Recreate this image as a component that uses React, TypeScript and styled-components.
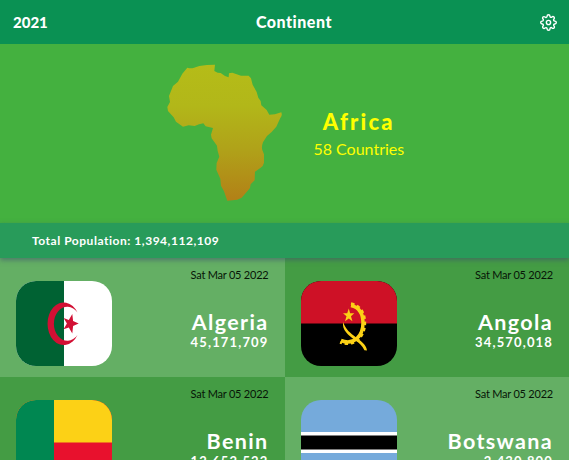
import React from 'react';
import styled, { createGlobalStyle } from 'styled-components';
import { FiSettings } from 'react-icons/fi';

const GlobalStyle = createGlobalStyle`
  * { box-sizing: border-box; }
  body { margin: 0; font-family: Lato, sans-serif; overflow: hidden; }
  h1, h2, h3, p { margin: 0; }
`;

const Page = styled.div`
  height: 460px;
  overflow: hidden;
  background: #44b13f;
`;

const Header = styled.header`
  height: 44px;
  padding: 0 13px;
  display: grid;
  grid-template-columns: 243px auto 1fr;
  align-items: center;
  background: #0a9153;
  color: #fff;
  font-family: 'Gill Sans', 'Gill Sans MT', Lato, sans-serif;
  font-weight: 900;
  line-height: 20px;
`;

const Year = styled.span`
  font-size: 15px;
`;

const Title = styled.h1`
  font-size: 16px;
  font-weight: 900;
  letter-spacing: 0.5px;
`;

const SettingsButton = styled.button`
  justify-self: end;
  display: flex;
  margin-right: -1px;
  padding: 0;
  border: 0;
  background: none;
  color: #fff;
  font-size: 17px;
`;

const Hero = styled.section`
  height: 179px;
  padding: 20px 0 0 167px;
  display: flex;
  align-items: flex-start;
`;

const AfricaMap = styled.svg`
  width: 115.3px;
  height: 137.3px;
  flex: none;
`;

const HeroText = styled.div`
  width: 92px;
  margin: 44px 0 0 30.5px;
  color: #ff0;
  text-align: center;
  white-space: nowrap;
`;

const ContinentName = styled.h2`
  font-size: 22px;
  line-height: 28px;
  font-weight: 900;
  letter-spacing: 2.2px;
`;

const CountryCount = styled.p`
  font-size: 16px;
  line-height: 26px;
`;

const TotalBar = styled.div`
  position: relative;
  height: 35px;
  padding-left: 32px;
  display: flex;
  align-items: center;
  background: #289b5a;
  box-shadow: 0 2px 5px rgba(60, 80, 110, 0.6);
  color: #fff;
  font-size: 12px;
  font-weight: 700;
  letter-spacing: 0.53px;
`;

const Grid = styled.main`
  display: grid;
  grid-template-columns: 1fr 1fr;
  grid-auto-rows: 119px;
`;

const Card = styled.article<{ $dark: boolean }>`
  padding: 9px 16px 0;
  display: flex;
  justify-content: space-between;
  background: ${(p) => (p.$dark ? '#449c44' : '#64af64')};
`;

const FlagFrame = styled.div`
  width: 96px;
  height: 85px;
  margin-top: 14px;
  border-radius: 20px;
  overflow: hidden;
  svg { display: block; }
`;

const Info = styled.div`
  display: flex;
  flex-direction: column;
  align-items: flex-end;
  white-space: nowrap;
`;

const UpdatedOn = styled.p`
  font-size: 11px;
  line-height: 16px;
  color: #071507;
  letter-spacing: -0.22px;
`;

const CountryName = styled.h3`
  margin-top: 26px;
  color: #fff;
  font-size: 21.5px;
  line-height: 26px;
  font-weight: 700;
  letter-spacing: 1.35px;
`;

const Population = styled.p`
  color: #fff;
  font-size: 13px;
  line-height: 15px;
  font-weight: 700;
  letter-spacing: 1.15px;
`;

const AlgeriaFlag = () => (
  <svg width="96" height="85" viewBox="0 0 96 85">
    <path fill="#fff" d="M0 0h96v85H0z" />
    <path fill="#006233" d="M0 0h48v85H0z" />
    <path fill="#d21034" d="M61.500 31.500A16.200 21.300 0 1 0 61.500 54A13.500 17 0 1 1 61.500 31.500z" />
    <path fill="#d21034" d="M56.300 33l.8 7.100 5.600 2.400-5.600 2.400-.8 7.600-3.500-6.100-5.200 1.800 3.300-5.700-3.300-5.500 5.200 1.900z" />
  </svg>
);

const AngolaFlag = () => (
  <svg width="96" height="85" viewBox="0 0 96 85">
    <path d="M0 0h96v85H0z" />
    <path fill="#ce1126" d="M0 0h96v42.500H0z" />
    <g fill="none" stroke="#fcd116">
      <path strokeWidth="3.500" d="M50 24.500C59 26.500 62 34 62 42C62 55 53 64.500 40 59.500" />
      <path strokeWidth="2.400" strokeDasharray="3.400 2.800" d="M50 22.500C60.500 25 64 33 64 42C64 56.500 53 66.500 39 61.500" />
    </g>
    <path fill="#fcd116" d="M42.200 41c2.500 7.500 7 11 13 15.500 5 3.800 10 7 10.800 13l-2.600-.2c-2-4.500-5-6.800-9-10C47.500 54.300 40.500 49 42.200 41z" />
    <path fill="#fcd116" d="M47.800 27.500l1.300 4.700h4.200L50 35.300l1.400 5-3.600-2.900-3.800 2.900 1.500-5-3.500-3.100h4.200z" />
  </svg>
);

const BeninFlag = () => (
  <svg width="96" height="85" viewBox="0 0 96 85">
    <path fill="#e8112d" d="M0 0h96v85H0z" />
    <path fill="#fcd116" d="M0 0h96v42.500H0z" />
    <path fill="#008751" d="M0 0h38v85H0z" />
  </svg>
);

const BotswanaFlag = () => (
  <svg width="96" height="85" viewBox="0 0 96 85">
    <path fill="#75aadb" d="M0 0h96v85H0z" />
    <path fill="#fff" d="M0 32h96v21H0z" />
    <path d="M0 35.500h96v14H0z" />
  </svg>
);

const countries = [
  { name: 'Algeria', population: '45,171,709', Flag: AlgeriaFlag, dark: false },
  { name: 'Angola', population: '34,570,018', Flag: AngolaFlag, dark: true },
  { name: 'Benin', population: '12,652,522', Flag: BeninFlag, dark: true },
  { name: 'Botswana', population: '2,430,800', Flag: BotswanaFlag, dark: false },
];

export default function App() {
  return (
    <>
      <GlobalStyle />
      <Page>
        <Header>
          <Year>2021</Year>
          <Title>Continent</Title>
          <SettingsButton aria-label="Settings"><FiSettings /></SettingsButton>
        </Header>
        <Hero>
          <AfricaMap viewBox="36 28 346 412">
            <defs>
              <linearGradient id="land" x1="0" y1="0" x2="0" y2="1">
                <stop offset="0" stopColor="#b5bc18" />
                <stop offset="0.300" stopColor="#b2b719" />
                <stop offset="0.620" stopColor="#b0a219" />
                <stop offset="1" stopColor="#b28017" />
              </linearGradient>
            </defs>
            <path
              fill="url(#land)"
              d="M97 39Q106 42 115 40L133 34L156 31L180 30L178 49L188 54L197 55L210 64L221 68L222 56L232 54L258 63L281 63L288 71L293 90L305 112L310 129L317 139L319 152L335 166L343 180L360 179L379 173Q383 183 376 190L364 216L350 232L336 244L324 263Q319 277 322 286L327 299V324Q325 334 317 339L300 351L299 377L287 389L285 400L273 414L260 429L247 435L217 438L207 410L198 393L196 372L184 345L185 325L193 306L188 288L186 273L170 251L168 240L174 220L152 215L145 206L132 209L119 214L101 212L84 216L63 201L56 188L39 169L37 157L45 142L42 124L54 94L69 81L82 57Z"
            />
          </AfricaMap>
          <HeroText>
            <ContinentName>Africa</ContinentName>
            <CountryCount>58 Countries</CountryCount>
          </HeroText>
        </Hero>
        <TotalBar>Total Population: 1,394,112,109</TotalBar>
        <Grid>
          {countries.map(({ name, population, Flag, dark }) => (
            <Card key={name} $dark={dark}>
              <FlagFrame><Flag /></FlagFrame>
              <Info>
                <UpdatedOn>Sat Mar 05 2022</UpdatedOn>
                <CountryName>{name}</CountryName>
                <Population>{population}</Population>
              </Info>
            </Card>
          ))}
        </Grid>
      </Page>
    </>
  );
}
